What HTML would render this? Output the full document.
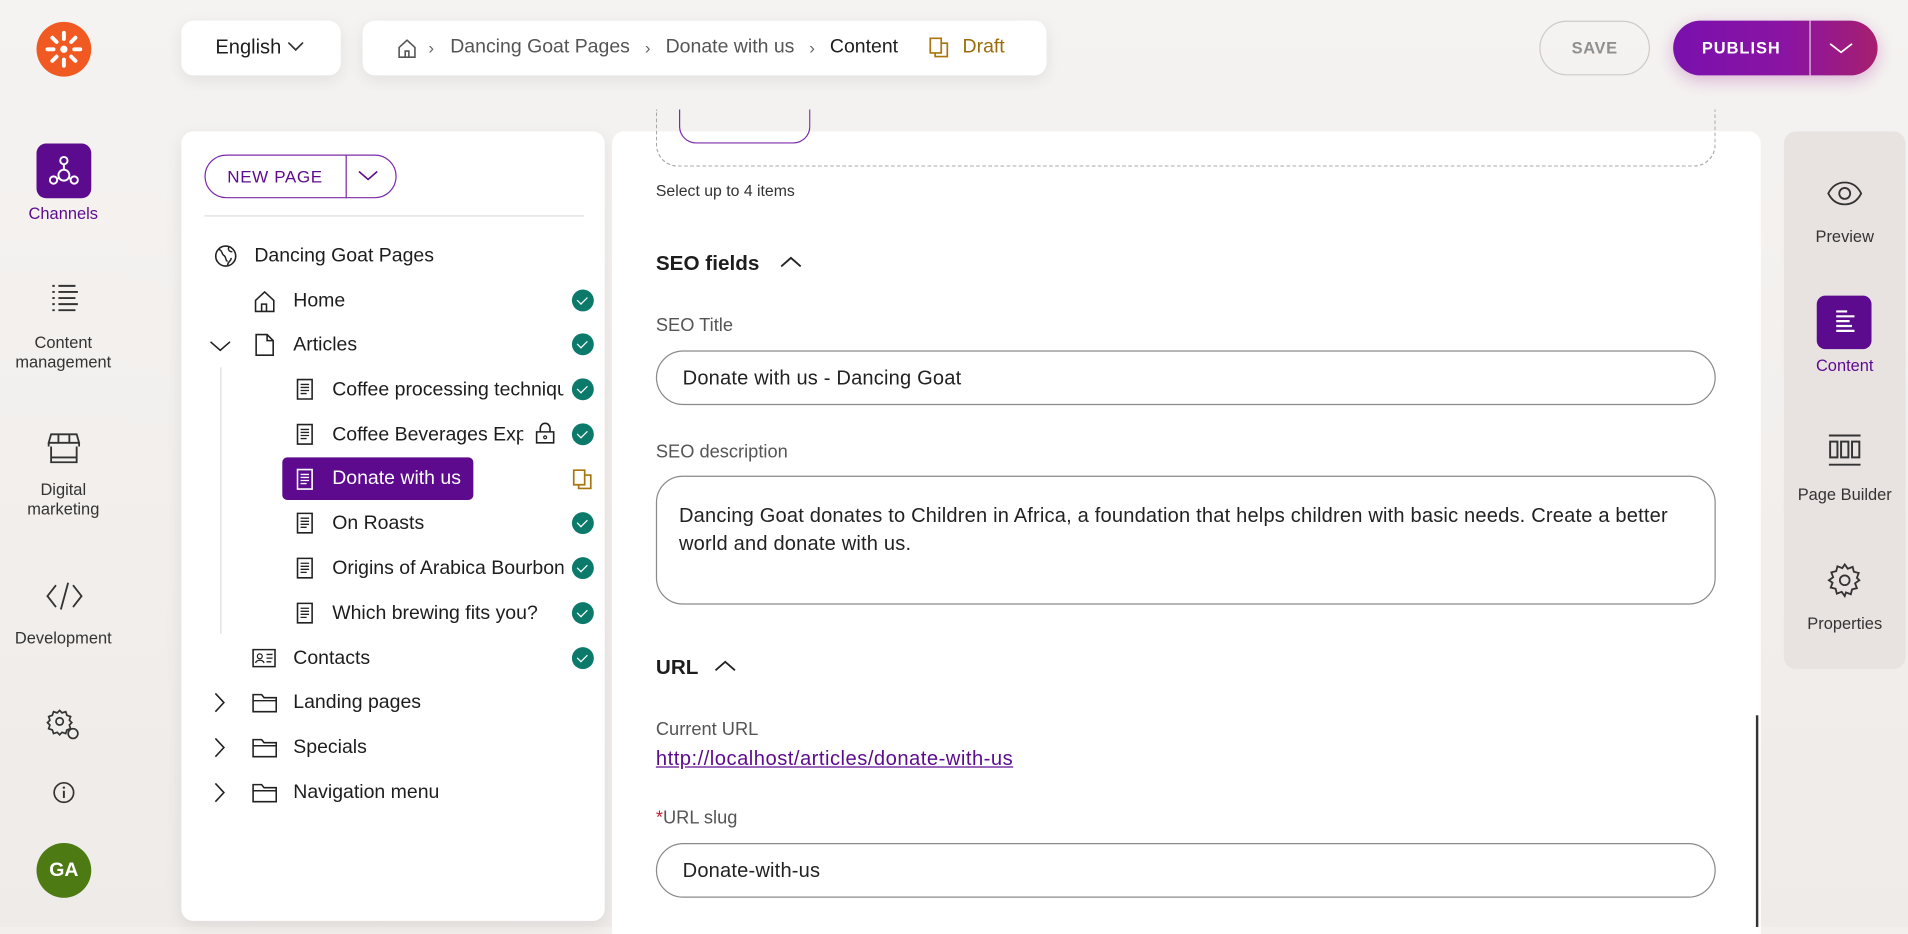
<!DOCTYPE html>
<html><head><meta charset="utf-8"><style>
*{box-sizing:border-box;margin:0;padding:0}
html,body{width:1908px;height:927px;overflow:hidden;background:#f2efed}
#s{position:absolute;left:0;top:0;width:1568px;height:762px;transform:scale(1.21684,1.2165);transform-origin:0 0;font-family:"Liberation Sans",sans-serif;color:#1d1d1d;background:linear-gradient(#f5f3f1,#efebe9)}
.a{position:absolute}
.card{background:#fff;border-radius:10px;box-shadow:0 4px 14px rgba(0,0,0,.08)}
.t{position:absolute;white-space:nowrap;line-height:1}
.chk{position:absolute;left:470px;width:18px;height:18px;border-radius:50%;background:#0b7a6a}
.chk:after{content:"";position:absolute;left:6px;top:4px;width:4px;height:7px;border:solid #fff;border-width:0 1.5px 1.5px 0;transform:rotate(45deg)}
.nl{position:absolute;width:104px;text-align:center;font-size:13.5px;color:#333;line-height:16px}
.rl{position:absolute;left:1466px;width:100px;text-align:center;font-size:13.5px;color:#333}
.lbl{position:absolute;left:539px;font-size:15px;color:#555}
.inp{position:absolute;left:539px;width:871px;border:1px solid #8a8a8a;border-radius:23px;background:#fff;font-size:16.5px;letter-spacing:.15px;color:#222}
</style></head><body><div id="s">
<div class="a" style="left:30px;top:18px;width:45px;height:45px;border-radius:50%;background:#f05a22"></div>
<svg class="a" style="left:30px;top:18px" width="45" height="45" viewBox="0 0 45 45"><g stroke="#fff" stroke-width="3.2" stroke-linecap="round"><path d="M22.5 9v5M22.5 31v5M9 22.5h5M31 22.5h5M13 13l3.5 3.5M28.5 28.5L32 32M32 13l-3.5 3.5M16.5 28.5L13 32"/></g><circle cx="22.5" cy="22.5" r="3" fill="#fff"/></svg>

<div class="a card" style="left:149px;top:17px;width:131px;height:45px"></div>
<div class="t" style="left:177px;top:31px;font-size:16.5px">English</div>
<svg class="a" style="left:236px;top:34px" width="14" height="9"><path d="M1 1l6 6 6-6" stroke="#333" fill="none" stroke-width="1.4"/></svg>

<div class="a card" style="left:298px;top:17px;width:562px;height:45px"></div>
<svg class="a" style="left:326px;top:31px" width="17" height="17" viewBox="0 0 17 17"><path d="M2 8L8.5 2 15 8v8H2zM7 16v-5h3v5" stroke="#555" fill="none" stroke-width="1.3"/></svg>
<div class="t" style="left:352px;top:32px;font-size:14px;color:#666">›</div>
<div class="t" style="left:370px;top:31px;font-size:16px;color:#555">Dancing Goat Pages</div>
<div class="t" style="left:530px;top:32px;font-size:14px;color:#666">›</div>
<div class="t" style="left:547px;top:31px;font-size:16px;color:#555">Donate with us</div>
<div class="t" style="left:665px;top:32px;font-size:14px;color:#666">›</div>
<div class="t" style="left:682px;top:31px;font-size:16px;color:#1d1d1d">Content</div>
<svg class="a" style="left:763px;top:30px" width="18" height="18"><path d="M1.5 1.5h9v12h-9zM10.5 5.5h5v11h-10v-3" stroke="#a8760c" fill="none" stroke-width="1.4"/></svg>
<div class="t" style="left:791px;top:31px;font-size:16px;color:#9c6c0a">Draft</div>

<div class="a" style="left:1265px;top:17px;width:91px;height:45px;border:1px solid #cfcac8;border-radius:23px"></div>
<div class="t" style="left:1265px;width:91px;text-align:center;top:33px;font-size:13.5px;font-weight:bold;color:#8f8f8f;letter-spacing:.5px">SAVE</div>
<div class="a" style="left:1375px;top:17px;width:168px;height:45px;border-radius:23px;background:linear-gradient(90deg,#7a10ad,#8a14a3 55%,#a61f6f);box-shadow:0 4px 14px rgba(160,30,150,.3)"></div>
<div class="a" style="left:1487px;top:17px;width:1px;height:45px;background:#e6c9ea"></div>
<div class="t" style="left:1375px;width:112px;text-align:center;top:33px;font-size:13.5px;font-weight:bold;color:#fff;letter-spacing:.8px">PUBLISH</div>
<svg class="a" style="left:1503px;top:35px" width="20" height="10"><path d="M1 1l9 7 9-7" stroke="#fff" fill="none" stroke-width="1.4"/></svg>

<div class="a" style="left:30px;top:118px;width:45px;height:45px;border-radius:8px;background:#5d0b8e"></div>
<svg class="a" style="left:30px;top:118px" width="45" height="45"><g stroke="#fff" fill="none" stroke-width="1.6"><circle cx="22.5" cy="14" r="3"/><circle cx="14" cy="30" r="3"/><circle cx="31" cy="30" r="3"/><circle cx="22.5" cy="26" r="4.5"/><path d="M22.5 17v4.5M17 29l2-1M28 29l-2-1"/></g></svg>
<div class="nl" style="left:0;top:168px;color:#5d0b8e">Channels</div>
<svg class="a" style="left:40px;top:233px" width="26" height="28"><g stroke="#333" stroke-width="1.6"><path d="M3 2h2M8 2h14M3 7h2M8 7h16M3 12h2M8 12h14M3 17h2M8 17h16M3 22h2M8 22h14"/></g></svg>
<div class="nl" style="left:0;top:274px">Content<br>management</div>
<svg class="a" style="left:39px;top:355px" width="27" height="27"><path d="M3 2h21l2 7H1zM1 9v3M26 9v3M3 12v13h21V12M3 21h21M9 2v7M18 2v7" stroke="#333" fill="none" stroke-width="1.5"/></svg>
<div class="nl" style="left:0;top:395px">Digital<br>marketing</div>
<svg class="a" style="left:37px;top:477px" width="32" height="26"><path d="M9 4L2 13l7 9M23 4l7 9-7 9M19 2l-6 22" stroke="#333" fill="none" stroke-width="1.5"/></svg>
<div class="nl" style="left:0;top:517px">Development</div>
<svg class="a" style="left:38px;top:582px" width="30" height="28" viewBox="0 0 30 28"><g stroke="#333" fill="none" stroke-width="1.4"><circle cx="11" cy="11" r="3"/><path d="M11 2l2 2 3-1 1 3 3 1-1 3 2 2-2 2 1 3-3 1-1 3-3-1-2 2-2-2-3 1-1-3-3-1 1-3-2-2 2-2-1-3 3-1 1-3 3 1z"/><circle cx="22" cy="21" r="4"/></g></svg>
<svg class="a" style="left:43px;top:642px" width="19" height="19"><circle cx="9.5" cy="9.5" r="8" stroke="#333" fill="none" stroke-width="1.4"/><path d="M9.5 8v6" stroke="#333" stroke-width="1.6"/><circle cx="9.5" cy="5.5" r="1" fill="#333"/></svg>
<div class="a" style="left:30px;top:693px;width:45px;height:45px;border-radius:50%;background:#4d7a12;color:#fff;font-weight:bold;font-size:16px;text-align:center;line-height:45px">GA</div>

<div class="a card" style="left:149px;top:108px;width:348px;height:649px"></div>
<div class="a" style="left:168px;top:127px;width:158px;height:36px;border:1.3px solid #7b2aa8;border-radius:18px"></div>
<div class="a" style="left:284px;top:127px;width:1px;height:36px;background:#7b2aa8"></div>
<div class="t" style="left:168px;width:116px;text-align:center;top:138px;font-size:14px;color:#5d0b8e;letter-spacing:.5px">NEW PAGE</div>
<svg class="a" style="left:294px;top:140px" width="17" height="9"><path d="M1 1l7.5 6.5L16 1" stroke="#5d0b8e" fill="none" stroke-width="1.3"/></svg>
<div class="a" style="left:168px;top:177px;width:312px;height:1px;background:#e0dcdb"></div>
<div class="a" style="left:181px;top:302px;width:1px;height:219px;background:#ddd"></div>

<svg class="a" style="left:176px;top:201px" width="19" height="19"><circle cx="9.5" cy="9.5" r="8.2" stroke="#222" fill="none" stroke-width="1.3"/><path d="M4 4c3 1 2 4 4 5s1 4 3 5M12 2c-1 3 1 4 3 4M11 17c0-3 3-3 3-6" stroke="#222" fill="none" stroke-width="1.2"/></svg>
<div class="t" style="left:209px;top:203px;font-size:16px">Dancing Goat Pages</div>

<svg class="a" style="left:208px;top:238px" width="19" height="19"><path d="M2 9L9.5 2 17 9v9H2zM7 18v-6h4v6" stroke="#222" fill="none" stroke-width="1.3"/></svg>
<div class="t" style="left:241px;top:240px;font-size:16px">Home</div><div class="chk" style="top:238px"></div>

<svg class="a" style="left:172px;top:280px" width="18" height="10"><path d="M1 1l8 7 8-7" stroke="#222" fill="none" stroke-width="1.3"/></svg>
<svg class="a" style="left:209px;top:274px" width="17" height="19"><path d="M1.5 1h9l5 5v12h-14zM10.5 1v5h5" stroke="#222" fill="none" stroke-width="1.3"/></svg>
<div class="t" style="left:241px;top:276px;font-size:16px">Articles</div><div class="chk" style="top:274px"></div>

<svg class="a" style="left:0;top:0;width:0;height:0"><defs><g id="doc"><path d="M1.5 1h12v16h-12z" stroke="currentColor" fill="none" stroke-width="1.3"/><path d="M4 5h7M4 7.5h7M4 10h7M4 12.5h5" stroke="currentColor" stroke-width="1.1"/></g></defs></svg>
<svg class="a" style="left:243px;top:311px;color:#222" width="15" height="18"><use href="#doc"/></svg>
<div class="t" style="left:273px;top:313px;font-size:16px;width:190px;overflow:hidden">Coffee processing techniques</div><div class="chk" style="top:311px"></div>
<svg class="a" style="left:243px;top:348px;color:#222" width="15" height="18"><use href="#doc"/></svg>
<div class="t" style="left:273px;top:350px;font-size:16px;width:157px;overflow:hidden">Coffee Beverages Explained</div>
<svg class="a" style="left:439px;top:346px" width="18" height="20"><path d="M5 9V6a4 4 0 018 0v3M2 9h14v9H2z" stroke="#222" fill="none" stroke-width="1.3"/><circle cx="9" cy="13.5" r="1.2" stroke="#222" fill="none"/></svg>
<div class="chk" style="top:348px"></div>
<div class="a" style="left:232px;top:376px;width:157px;height:35px;border-radius:4px;background:#5d0a8f"></div>
<svg class="a" style="left:243px;top:385px;color:#fff" width="15" height="18"><use href="#doc"/></svg>
<div class="t" style="left:273px;top:386px;font-size:16px;color:#fff">Donate with us</div>
<svg class="a" style="left:470px;top:385px" width="18" height="18"><path d="M1.5 1.5h9v12h-9zM10.5 5.5h5v11h-10v-3" stroke="#a8760c" fill="none" stroke-width="1.4"/></svg>
<svg class="a" style="left:243px;top:421px;color:#222" width="15" height="18"><use href="#doc"/></svg>
<div class="t" style="left:273px;top:423px;font-size:16px">On Roasts</div><div class="chk" style="top:421px"></div>
<svg class="a" style="left:243px;top:458px;color:#222" width="15" height="18"><use href="#doc"/></svg>
<div class="t" style="left:273px;top:460px;font-size:16px;width:190px;overflow:hidden">Origins of Arabica Bourbon</div><div class="chk" style="top:458px"></div>
<svg class="a" style="left:243px;top:495px;color:#222" width="15" height="18"><use href="#doc"/></svg>
<div class="t" style="left:273px;top:497px;font-size:16px">Which brewing fits you?</div><div class="chk" style="top:495px"></div>
<svg class="a" style="left:207px;top:532px" width="20" height="17"><path d="M1 2h18v14H1z" stroke="#222" fill="none" stroke-width="1.3"/><circle cx="6.5" cy="7.5" r="2" stroke="#222" fill="none"/><path d="M3 13c1-3 6-3 7 0M12 6h5M12 9h5M12 12h4" stroke="#222" stroke-width="1.1" fill="none"/></svg>
<div class="t" style="left:241px;top:534px;font-size:16px">Contacts</div><div class="chk" style="top:532px"></div>
<svg class="a" style="left:176px;top:569px" width="10" height="17"><path d="M1 1l7 7.5L1 16" stroke="#222" fill="none" stroke-width="1.3"/></svg>
<svg class="a" style="left:207px;top:569px" width="21" height="17"><path d="M1 2h7l2 2.5h10V16H1z" stroke="#222" fill="none" stroke-width="1.3"/><path d="M1 7h19" stroke="#222" stroke-width="1.2"/></svg>
<div class="t" style="left:241px;top:570px;font-size:16px">Landing pages</div>
<svg class="a" style="left:176px;top:606px" width="10" height="17"><path d="M1 1l7 7.5L1 16" stroke="#222" fill="none" stroke-width="1.3"/></svg>
<svg class="a" style="left:207px;top:606px" width="21" height="17"><path d="M1 2h7l2 2.5h10V16H1z" stroke="#222" fill="none" stroke-width="1.3"/><path d="M1 7h19" stroke="#222" stroke-width="1.2"/></svg>
<div class="t" style="left:241px;top:607px;font-size:16px">Specials</div>
<svg class="a" style="left:176px;top:643px" width="10" height="17"><path d="M1 1l7 7.5L1 16" stroke="#222" fill="none" stroke-width="1.3"/></svg>
<svg class="a" style="left:207px;top:643px" width="21" height="17"><path d="M1 2h7l2 2.5h10V16H1z" stroke="#222" fill="none" stroke-width="1.3"/><path d="M1 7h19" stroke="#222" stroke-width="1.2"/></svg>
<div class="t" style="left:241px;top:644px;font-size:16px">Navigation menu</div>

<div class="a" style="left:503px;top:108px;width:944px;height:660px;background:#fff;border-radius:10px 10px 0 0"></div>
<div class="a" style="left:539px;top:90px;width:871px;height:47px;border:1px dashed #a9a9a9;border-top:none;border-radius:0 0 18px 18px"></div>
<div class="a" style="left:558px;top:90px;width:108px;height:28px;border:1.2px solid #7b2aa8;border-top:none;border-radius:0 0 14px 14px"></div>
<div class="t" style="left:539px;top:150px;font-size:13px;color:#333">Select up to 4 items</div>
<div class="t" style="left:539px;top:208px;font-size:17px;font-weight:bold">SEO fields</div>
<svg class="a" style="left:641px;top:210px" width="18" height="10"><path d="M1 9l8-7 8 7" stroke="#222" fill="none" stroke-width="1.5"/></svg>
<div class="lbl" style="top:259px">SEO Title</div>
<div class="inp" style="top:288px;height:45px;padding:13px 21px">Donate with us - Dancing Goat</div>
<div class="lbl" style="top:363px">SEO description</div>
<div class="inp" style="top:391px;height:106px;border-radius:22px;padding:21px 18px;line-height:23px">Dancing Goat donates to Children in Africa, a foundation that helps children with basic needs. Create a better world and donate with us.</div>
<div class="t" style="left:539px;top:540px;font-size:17px;font-weight:bold">URL</div>
<svg class="a" style="left:587px;top:542px" width="18" height="10"><path d="M1 9l8-7 8 7" stroke="#222" fill="none" stroke-width="1.5"/></svg>
<div class="lbl" style="top:591px">Current URL</div>
<div class="t" style="left:539px;top:616px;font-size:16.6px;letter-spacing:.4px;color:#5d0b8e;text-decoration:underline">http://localhost/articles/donate-with-us</div>
<div class="lbl" style="top:664px"><span style="color:#c01f2f">*</span>URL slug</div>
<div class="inp" style="top:693px;height:45px;padding:13px 21px">Donate-with-us</div>
<div class="a" style="left:1443px;top:588px;width:2px;height:174px;background:#333"></div>

<div class="a" style="left:1466px;top:108px;width:100px;height:442px;border-radius:10px;background:#e8e3e1"></div>
<svg class="a" style="left:1501px;top:148px" width="30" height="22"><path d="M1.5 11C5 4 10 2 15 2s10 2 13.5 9C25 18 20 20 15 20S5 18 1.5 11z" stroke="#333" fill="none" stroke-width="1.5"/><circle cx="15" cy="11" r="4.5" stroke="#333" fill="none" stroke-width="1.5"/></svg>
<div class="rl" style="top:187px">Preview</div>
<div class="a" style="left:1493px;top:243px;width:45px;height:44px;border-radius:7px;background:#5d0b8e"></div>
<svg class="a" style="left:1493px;top:243px" width="45" height="44"><g stroke="#fff" stroke-width="1.8"><path d="M16 13h9M16 17h15M16 21h11M16 25h13M16 29h15"/></g></svg>
<div class="rl" style="top:293px;color:#5d0b8e">Content</div>
<svg class="a" style="left:1502px;top:356px" width="28" height="28"><g stroke="#333" fill="none" stroke-width="1.6"><path d="M1 2h26M1 26h26"/><rect x="2" y="7" width="6" height="13"/><rect x="11" y="7" width="6" height="13"/><rect x="20" y="7" width="6" height="13"/></g></svg>
<div class="rl" style="top:399px">Page Builder</div>
<svg class="a" style="left:1501px;top:462px" width="30" height="30" viewBox="0 0 30 30"><g stroke="#333" fill="none" stroke-width="1.5"><circle cx="15" cy="15" r="4"/><path d="M15 2l2.5 3.5 4-1.5 1 4 4 1-1.5 4L27 15l-3.5 2.5 1.5 4-4 1-1 4-4-1.5L15 28l-2.5-3.5-4 1.5-1-4-4-1 1.5-4L2 15l3.5-2.5-1.5-4 4-1 1-4 4 1.5z"/></g></svg>
<div class="rl" style="top:505px">Properties</div>
</div></body></html>
